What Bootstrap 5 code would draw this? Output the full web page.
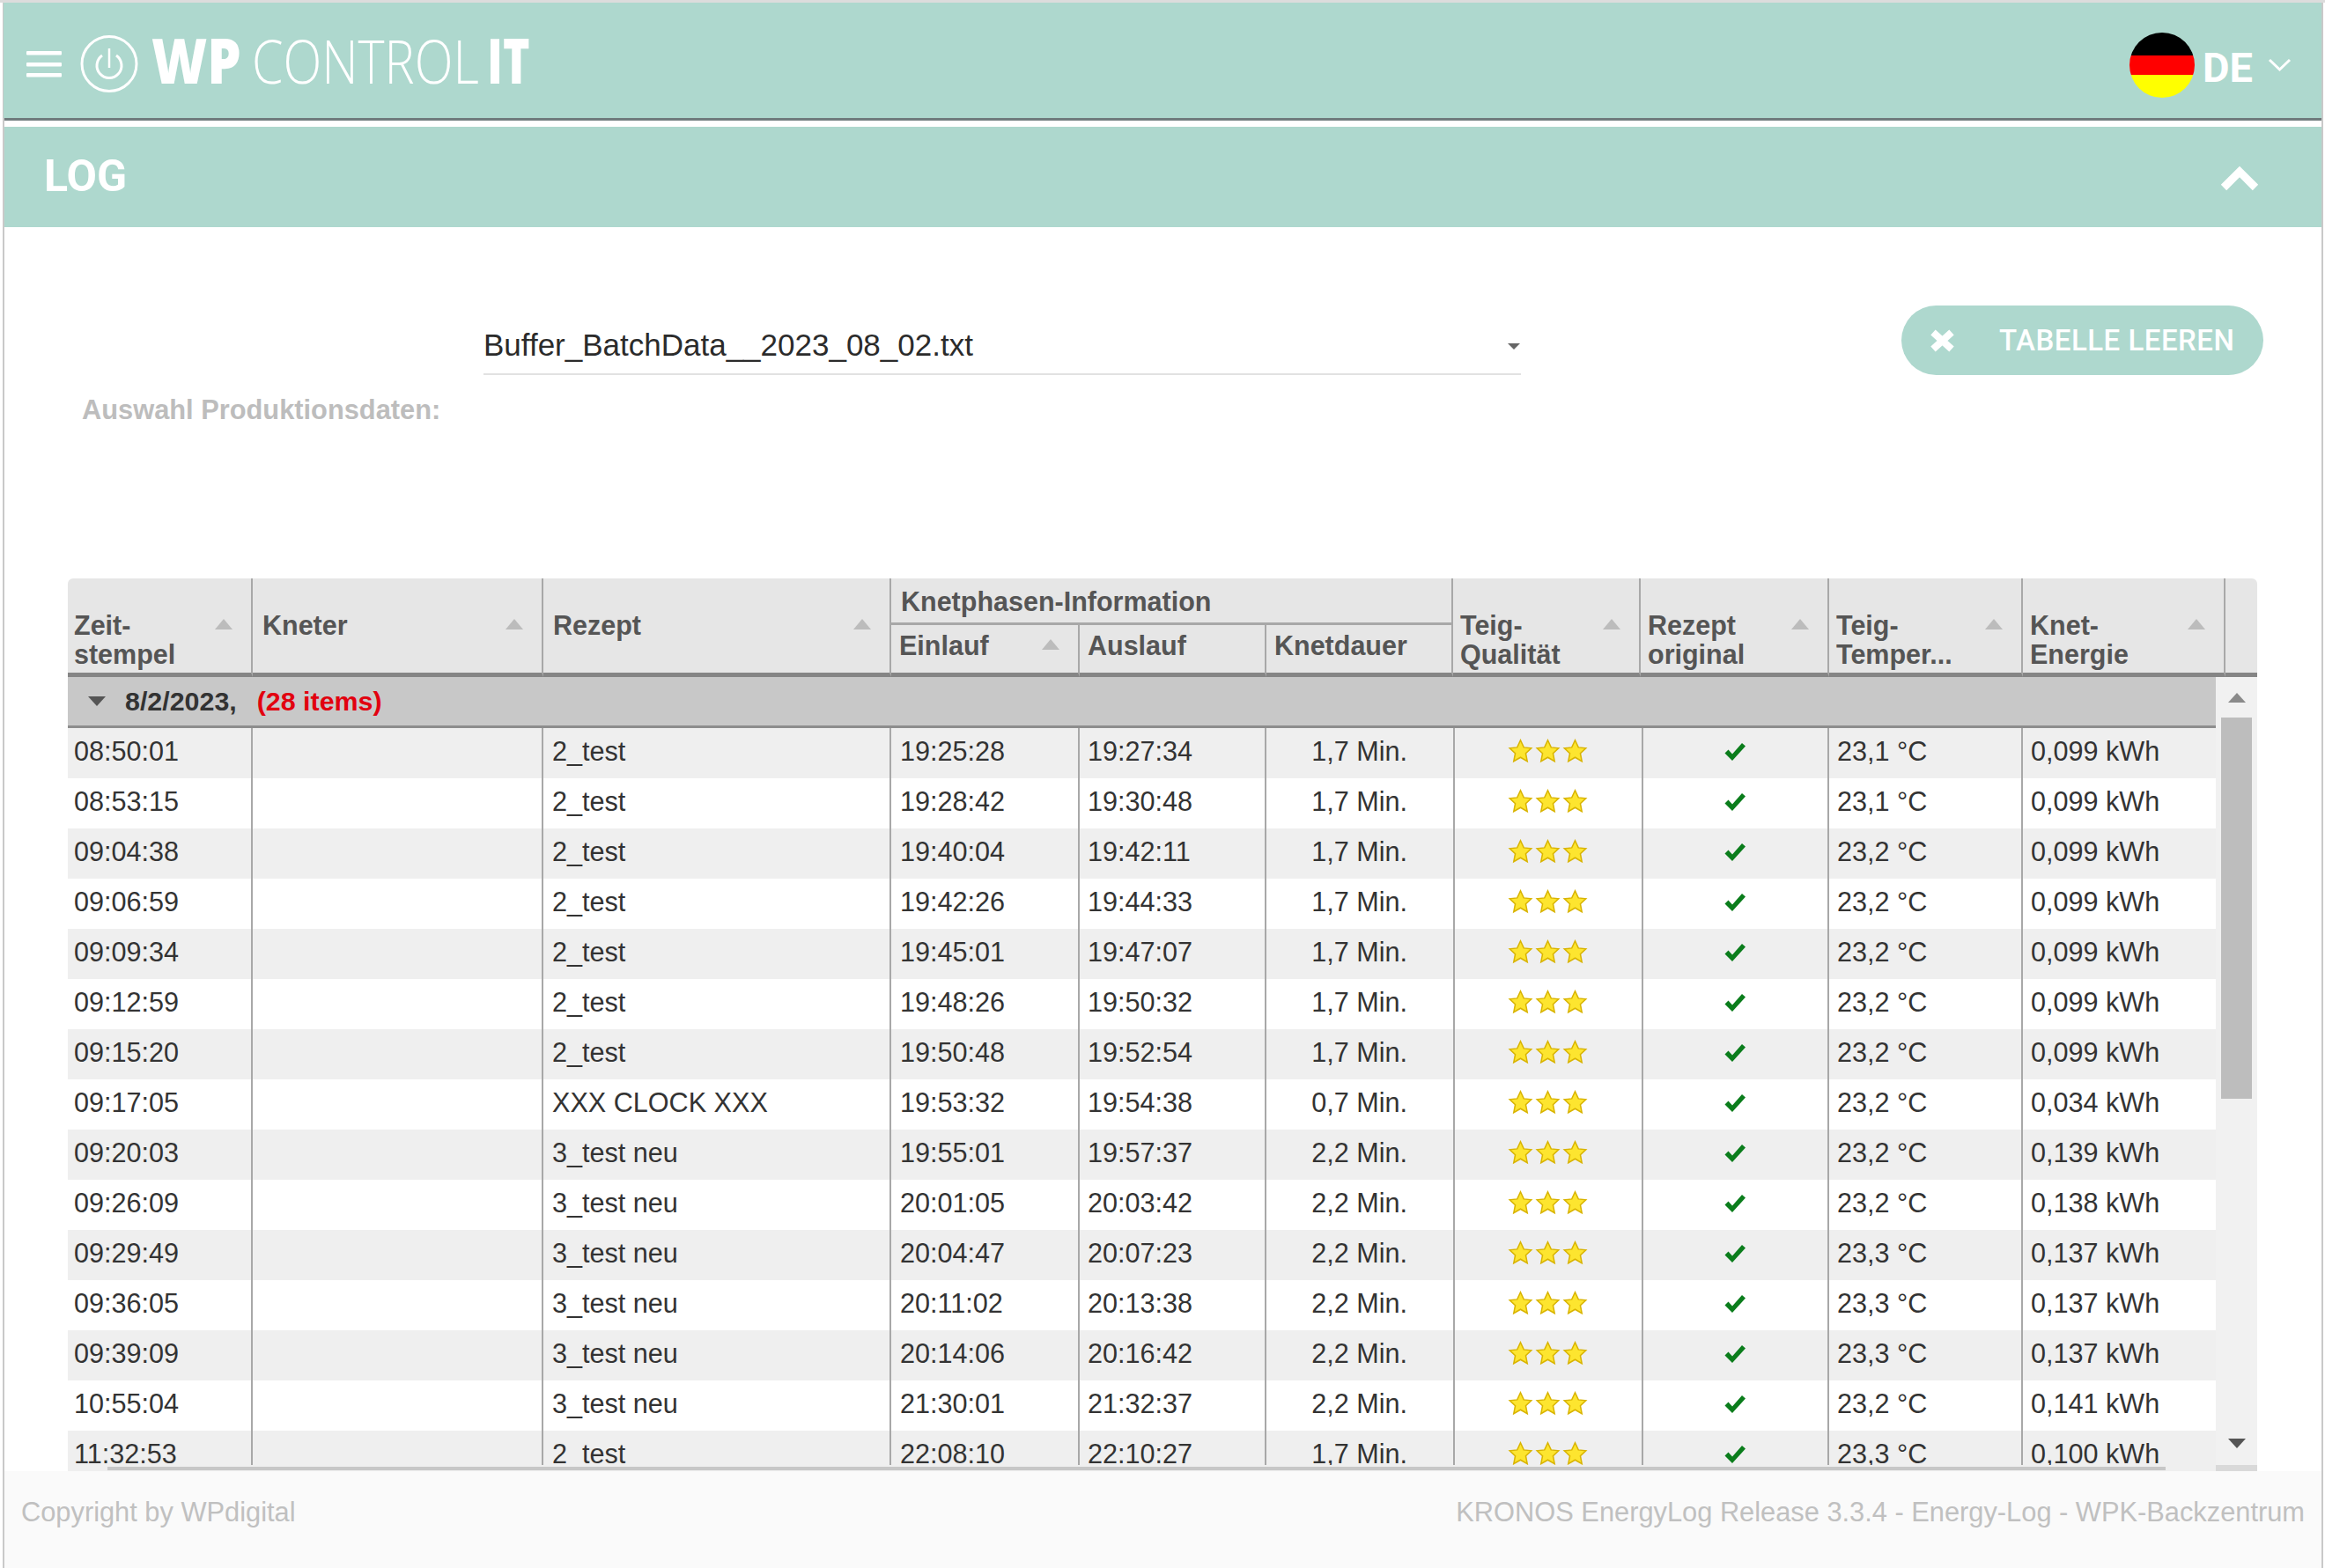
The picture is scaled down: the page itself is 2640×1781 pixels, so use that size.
<!DOCTYPE html>
<html lang="de">
<head>
<meta charset="utf-8">
<title>LOG</title>
<link href="https://cdn.jsdelivr.net/npm/bootstrap@5.3.0/dist/css/bootstrap.min.css" rel="stylesheet">
<style>
html,body{margin:0;height:1781px;overflow:hidden;background:#fff}
body{font-family:"Liberation Sans",Arial,sans-serif;color:#333}
.topstrip{height:3px;background:#dcdcdc}
.frame{margin-left:3px;width:2635px;height:1778px;border-left:2px solid #c9c9c9;border-right:2px solid #c9c9c9}
.appbar{height:131px;background:#aed8ce;padding:0 34px 0 26px;margin-left:-1px}
.logo{width:620px;height:131px;margin-left:-30px;flex:none}
.langbox{padding-top:10px}
.flag{width:74px;height:74px;flex:none;margin-right:9px}
.lang{font-family:Roboto,sans-serif;font-weight:700;font-size:47px;line-height:1;color:#fff;margin-right:17px;margin-top:6px}
.barline{height:3px;background:#6f7b7d}
.logbar{height:114px;margin-top:7px;background:#aed8ce;padding:0 71px 2px 45px;font-family:Roboto,sans-serif;font-weight:700;font-size:50px;color:#fff}
.logbar svg{margin-top:5px}
.toolbar{height:399px}
.prodlabel{margin:191px 0 0 88px;width:456px;font-weight:700;font-size:30.800px;line-height:34px;color:#bdbdbd}
.fakeselect{margin-top:100px;width:1178px;height:68px;border-bottom:2px solid #e2e2e2;font-size:35px;line-height:1;color:#2b2b2b}
.selcaret{width:0;height:0;border-left:7px solid transparent;border-right:7px solid transparent;border-top:7px solid #666;margin:5px 1px 0 0}
.clearbtn{margin:89px 66px 0 auto;width:411px;height:79px;border-radius:40px;background:#aed8ce;color:#fff;font-family:Roboto,sans-serif;font-weight:500;font-size:33px;letter-spacing:.5px;padding:0 32px;border:0;white-space:nowrap}
.clearbtn span{margin-left:50px}
.logtable{margin-left:72px;width:2486px}
.logtable table{table-layout:fixed;border-collapse:separate;border-spacing:0;margin:0;width:100%}
.headtab th{background:#e6e6e6;color:#555;font-weight:700;font-size:30.500px;line-height:33px;padding:37px 21px 0 8px;border-right:2px solid #a8a8a8;border-bottom:5px solid #858585;vertical-align:top;height:59px}
.headtab{border-radius:6px 6px 0 0;overflow:hidden}
.headtab th.first{padding-left:7px}
.headtab th.wide{padding-left:11px}
.headtab th.grouphead{height:53px;border-bottom:3px solid #a8a8a8;padding:10px 0 0 11px;text-align:left}
.headtab th.sub{padding-top:7px;padding-left:9px}
.headtab th.lastcell{border-right:0;padding:0}
.sorter{width:0;height:0;flex:none;border-left:10px solid transparent;border-right:10px solid transparent;border-bottom:12px solid #bcbcbc;margin-top:9px}
.viewport{height:902px;overflow:hidden;width:2439px;background:#efefef}
.rowclip{height:837px;overflow:hidden;background:#fff}
.grouprow{height:58px;background:#c8c8c8;border-bottom:3px solid #8d8d8d;padding-left:23px;font-size:30.400px;color:#333;font-weight:700}
.grouptri{width:0;height:0;border-left:10px solid transparent;border-right:10px solid transparent;border-top:11px solid #555;margin-right:22px}
.groupcount{color:#e2000f;margin-left:23px}
.bodytab{--bs-table-striped-bg:#efefef;--bs-table-striped-color:#333;--bs-table-color:#333;--bs-table-bg:#fff}
.bodytab td{height:57px;padding:0 9px 6px;font-size:30.600px;line-height:34px;color:#333;border-bottom:0;border-right:2px solid #a8a8a8;white-space:nowrap;vertical-align:middle;overflow:visible}
.bodytab td.first{padding-left:7px}
.bodytab td.recipe,.bodytab td.inl{padding-left:10px}
.bodytab td.dur{text-align:right;padding-right:52px}
.bodytab td.ctr{text-align:center;padding:0 2px 6px 0}
.bodytab td.lastcell{border-right:0}
.bodywrap{height:902px}
.hline{height:4px;width:2337px;margin-left:45px;background:#c7c7c7;margin-top:-5px;position:relative}
.vscroll{width:47px;height:902px;background:#f1f1f1}
.arrowup{width:0;height:0;border-left:10px solid transparent;border-right:10px solid transparent;border-bottom:11px solid #8a8a8a;margin:18px auto 17px}
.thumb{width:35px;height:433px;background:#bdbdbd;margin:0 auto}
.arrowdown{width:0;height:0;border-left:10px solid transparent;border-right:10px solid transparent;border-top:11px solid #555;margin:0 auto 19px}
.scrollend{height:7px;background:#d9d9d9}
.pagefoot{height:110px;background:#fafafa;padding:30px 19px 0 19px;font-size:30.800px;line-height:34px;color:#c0c0c0;position:relative}
.stars svg{width:29px;height:28px;margin:0 1px;vertical-align:-3px}
.okmark{width:26px;height:22px;vertical-align:-1px}
</style>
</head>
<body>
<svg width="0" height="0" style="position:absolute">
<defs>
<symbol id="star" viewBox="0 0 24 24"><path d="M12 1.5l3.2 7 7.3.8-5.4 5 1.5 7.7L12 18.2 5.400 22l1.500-7.700-5.400-5 7.300-.8z" fill="#fde52f" stroke="#d9b400" stroke-width="1.300"/></symbol>
<symbol id="ok" viewBox="0 0 26 22"><path d="M1.500 12.500l4-4 4.500 5L21 1l4 3.500L10 21z" fill="#0b7d1c"/></symbol>
</defs>
</svg>
<div class="topstrip"></div>
<div class="frame d-flex flex-column">
  <header class="appbar d-flex align-items-center justify-content-between">
    <svg class="logo" viewBox="0 0 620 131">
      <g fill="#fff"><rect x="30" y="55" width="40" height="4.500" rx="1"/><rect x="30" y="68" width="40" height="4.500" rx="1"/><rect x="30" y="80" width="40" height="4.500" rx="1"/></g>
      <g fill="none" stroke="#fff"><circle cx="124" cy="69.500" r="31" stroke-width="3"/><path d="M116 60a14 14 0 1 0 16 0" stroke-width="3"/><path d="M124 52v22" stroke-width="2.500"/></g>
      <text transform="translate(172 92) scale(.87 1)" font-family="'Open Sans',sans-serif" font-weight="800" font-size="70" fill="#fff">WP</text>
      <text transform="translate(286 92) scale(.83 1)" font-family="'Open Sans',sans-serif" font-weight="300" font-size="69" fill="#fff">CONTROL</text>
      <text transform="translate(553 92) scale(.74 1)" font-family="'Open Sans',sans-serif" font-weight="800" font-size="70" fill="#fff">IT</text>
    </svg>
    <div class="langbox d-flex align-items-center">
      <svg class="flag" viewBox="0 0 74 74"><defs><clipPath id="fc"><circle cx="37" cy="37" r="37"/></clipPath></defs><g clip-path="url(#fc)"><rect width="74" height="26" fill="#000"/><rect y="26" width="74" height="22" fill="#f00"/><rect y="48" width="74" height="26" fill="#ff0"/></g></svg>
      <span class="lang">DE</span>
      <svg width="27" height="16" viewBox="0 0 27 16"><path d="M2 2l11.500 11L25 2" fill="none" stroke="#fff" stroke-width="3"/></svg>
    </div>
  </header>
  <div class="barline"></div>
  <div class="logbar d-flex align-items-center justify-content-between">
    <span>LOG</span>
    <svg width="44" height="30" viewBox="0 0 44 30"><path d="M4 25L22 7l18 18" fill="none" stroke="#fff" stroke-width="9"/></svg>
  </div>
  <main class="flex-grow-1 d-flex flex-column overflow-hidden">
    <div class="toolbar d-flex align-items-start">
      <div class="prodlabel">Auswahl Produktionsdaten:</div>
      <div class="fakeselect d-flex align-items-center justify-content-between"><span>Buffer_BatchData__2023_08_02.txt</span><span class="selcaret"></span></div>
      <button type="button" class="clearbtn d-flex align-items-center">
        <svg width="29" height="26" viewBox="0 0 29 26"><path d="M4 3.500l21 19M25 3.500l-21 19" stroke="#fff" stroke-width="8" fill="none"/></svg>
        <span>TABELLE LEEREN</span>
      </button>
    </div>
    <div class="logtable">
      <table class="headtab">
        <colgroup><col style="width:210px"><col style="width:330px"><col style="width:395px"><col style="width:214px"><col style="width:212px"><col style="width:212px"><col style="width:213px"><col style="width:214px"><col style="width:220px"><col style="width:230px"><col style="width:36px"></colgroup>
        <thead>
          <tr>
            <th rowspan="2" class="first"><div class="d-flex align-items-start justify-content-between"><div>Zeit-<br>stempel</div><span class="sorter"></span></div></th>
            <th rowspan="2" class="wide"><div class="d-flex align-items-start justify-content-between">Kneter<span class="sorter"></span></div></th>
            <th rowspan="2" class="wide"><div class="d-flex align-items-start justify-content-between">Rezept<span class="sorter"></span></div></th>
            <th colspan="3" class="grouphead">Knetphasen-Information</th>
            <th rowspan="2"><div class="d-flex align-items-start justify-content-between"><div>Teig-<br>Qualität</div><span class="sorter"></span></div></th>
            <th rowspan="2"><div class="d-flex align-items-start justify-content-between"><div>Rezept<br>original</div><span class="sorter"></span></div></th>
            <th rowspan="2"><div class="d-flex align-items-start justify-content-between"><div>Teig-<br>Temper...</div><span class="sorter"></span></div></th>
            <th rowspan="2"><div class="d-flex align-items-start justify-content-between"><div>Knet-<br>Energie</div><span class="sorter"></span></div></th>
            <th rowspan="2" class="lastcell"></th>
          </tr>
          <tr>
            <th class="sub"><div class="d-flex align-items-start justify-content-between">Einlauf<span class="sorter"></span></div></th>
            <th class="sub">Auslauf</th>
            <th class="sub">Knetdauer</th>
          </tr>
        </thead>
      </table>
      <div class="bodywrap d-flex">
        <div class="viewport">
          <div class="grouprow d-flex align-items-center"><span class="grouptri"></span><span>8/2/2023,</span><span class="groupcount">(28 items)</span></div>
          <div class="rowclip">
          <table class="table table-striped bodytab">
            <colgroup><col style="width:210px"><col style="width:330px"><col style="width:395px"><col style="width:214px"><col style="width:212px"><col style="width:214px"><col style="width:214px"><col style="width:211px"><col style="width:220px"><col style="width:219px"></colgroup>
            <tbody>
            <tr><td class="first">08:50:01</td><td></td><td class="recipe">2_test</td><td class="inl">19:25:28</td><td>19:27:34</td><td class="dur">1,7 Min.</td><td class="ctr stars"><svg><use href="#star"/></svg><svg><use href="#star"/></svg><svg><use href="#star"/></svg></td><td class="ctr"><svg class="okmark"><use href="#ok"/></svg></td><td>23,1 °C</td><td class="lastcell">0,099 kWh</td></tr>
            <tr><td class="first">08:53:15</td><td></td><td class="recipe">2_test</td><td class="inl">19:28:42</td><td>19:30:48</td><td class="dur">1,7 Min.</td><td class="ctr stars"><svg><use href="#star"/></svg><svg><use href="#star"/></svg><svg><use href="#star"/></svg></td><td class="ctr"><svg class="okmark"><use href="#ok"/></svg></td><td>23,1 °C</td><td class="lastcell">0,099 kWh</td></tr>
            <tr><td class="first">09:04:38</td><td></td><td class="recipe">2_test</td><td class="inl">19:40:04</td><td>19:42:11</td><td class="dur">1,7 Min.</td><td class="ctr stars"><svg><use href="#star"/></svg><svg><use href="#star"/></svg><svg><use href="#star"/></svg></td><td class="ctr"><svg class="okmark"><use href="#ok"/></svg></td><td>23,2 °C</td><td class="lastcell">0,099 kWh</td></tr>
            <tr><td class="first">09:06:59</td><td></td><td class="recipe">2_test</td><td class="inl">19:42:26</td><td>19:44:33</td><td class="dur">1,7 Min.</td><td class="ctr stars"><svg><use href="#star"/></svg><svg><use href="#star"/></svg><svg><use href="#star"/></svg></td><td class="ctr"><svg class="okmark"><use href="#ok"/></svg></td><td>23,2 °C</td><td class="lastcell">0,099 kWh</td></tr>
            <tr><td class="first">09:09:34</td><td></td><td class="recipe">2_test</td><td class="inl">19:45:01</td><td>19:47:07</td><td class="dur">1,7 Min.</td><td class="ctr stars"><svg><use href="#star"/></svg><svg><use href="#star"/></svg><svg><use href="#star"/></svg></td><td class="ctr"><svg class="okmark"><use href="#ok"/></svg></td><td>23,2 °C</td><td class="lastcell">0,099 kWh</td></tr>
            <tr><td class="first">09:12:59</td><td></td><td class="recipe">2_test</td><td class="inl">19:48:26</td><td>19:50:32</td><td class="dur">1,7 Min.</td><td class="ctr stars"><svg><use href="#star"/></svg><svg><use href="#star"/></svg><svg><use href="#star"/></svg></td><td class="ctr"><svg class="okmark"><use href="#ok"/></svg></td><td>23,2 °C</td><td class="lastcell">0,099 kWh</td></tr>
            <tr><td class="first">09:15:20</td><td></td><td class="recipe">2_test</td><td class="inl">19:50:48</td><td>19:52:54</td><td class="dur">1,7 Min.</td><td class="ctr stars"><svg><use href="#star"/></svg><svg><use href="#star"/></svg><svg><use href="#star"/></svg></td><td class="ctr"><svg class="okmark"><use href="#ok"/></svg></td><td>23,2 °C</td><td class="lastcell">0,099 kWh</td></tr>
            <tr><td class="first">09:17:05</td><td></td><td class="recipe">XXX CLOCK XXX</td><td class="inl">19:53:32</td><td>19:54:38</td><td class="dur">0,7 Min.</td><td class="ctr stars"><svg><use href="#star"/></svg><svg><use href="#star"/></svg><svg><use href="#star"/></svg></td><td class="ctr"><svg class="okmark"><use href="#ok"/></svg></td><td>23,2 °C</td><td class="lastcell">0,034 kWh</td></tr>
            <tr><td class="first">09:20:03</td><td></td><td class="recipe">3_test neu</td><td class="inl">19:55:01</td><td>19:57:37</td><td class="dur">2,2 Min.</td><td class="ctr stars"><svg><use href="#star"/></svg><svg><use href="#star"/></svg><svg><use href="#star"/></svg></td><td class="ctr"><svg class="okmark"><use href="#ok"/></svg></td><td>23,2 °C</td><td class="lastcell">0,139 kWh</td></tr>
            <tr><td class="first">09:26:09</td><td></td><td class="recipe">3_test neu</td><td class="inl">20:01:05</td><td>20:03:42</td><td class="dur">2,2 Min.</td><td class="ctr stars"><svg><use href="#star"/></svg><svg><use href="#star"/></svg><svg><use href="#star"/></svg></td><td class="ctr"><svg class="okmark"><use href="#ok"/></svg></td><td>23,2 °C</td><td class="lastcell">0,138 kWh</td></tr>
            <tr><td class="first">09:29:49</td><td></td><td class="recipe">3_test neu</td><td class="inl">20:04:47</td><td>20:07:23</td><td class="dur">2,2 Min.</td><td class="ctr stars"><svg><use href="#star"/></svg><svg><use href="#star"/></svg><svg><use href="#star"/></svg></td><td class="ctr"><svg class="okmark"><use href="#ok"/></svg></td><td>23,3 °C</td><td class="lastcell">0,137 kWh</td></tr>
            <tr><td class="first">09:36:05</td><td></td><td class="recipe">3_test neu</td><td class="inl">20:11:02</td><td>20:13:38</td><td class="dur">2,2 Min.</td><td class="ctr stars"><svg><use href="#star"/></svg><svg><use href="#star"/></svg><svg><use href="#star"/></svg></td><td class="ctr"><svg class="okmark"><use href="#ok"/></svg></td><td>23,3 °C</td><td class="lastcell">0,137 kWh</td></tr>
            <tr><td class="first">09:39:09</td><td></td><td class="recipe">3_test neu</td><td class="inl">20:14:06</td><td>20:16:42</td><td class="dur">2,2 Min.</td><td class="ctr stars"><svg><use href="#star"/></svg><svg><use href="#star"/></svg><svg><use href="#star"/></svg></td><td class="ctr"><svg class="okmark"><use href="#ok"/></svg></td><td>23,3 °C</td><td class="lastcell">0,137 kWh</td></tr>
            <tr><td class="first">10:55:04</td><td></td><td class="recipe">3_test neu</td><td class="inl">21:30:01</td><td>21:32:37</td><td class="dur">2,2 Min.</td><td class="ctr stars"><svg><use href="#star"/></svg><svg><use href="#star"/></svg><svg><use href="#star"/></svg></td><td class="ctr"><svg class="okmark"><use href="#ok"/></svg></td><td>23,2 °C</td><td class="lastcell">0,141 kWh</td></tr>
            <tr><td class="first">11:32:53</td><td></td><td class="recipe">2_test</td><td class="inl">22:08:10</td><td>22:10:27</td><td class="dur">1,7 Min.</td><td class="ctr stars"><svg><use href="#star"/></svg><svg><use href="#star"/></svg><svg><use href="#star"/></svg></td><td class="ctr"><svg class="okmark"><use href="#ok"/></svg></td><td>23,3 °C</td><td class="lastcell">0,100 kWh</td></tr>
            </tbody>
          </table>
          </div>
        </div>
        <div class="vscroll d-flex flex-column">
          <div class="arrowup"></div>
          <div class="thumb"></div>
          <div class="mt-auto"></div>
          <div class="arrowdown"></div>
          <div class="scrollend"></div>
        </div>
      </div>
      <div class="hline"></div>
    </div>
  </main>
  <footer class="pagefoot d-flex justify-content-between">
    <span>Copyright by WPdigital</span>
    <span>KRONOS EnergyLog Release 3.3.4 - Energy-Log - WPK-Backzentrum</span>
  </footer>
</div>
</body>
</html>
